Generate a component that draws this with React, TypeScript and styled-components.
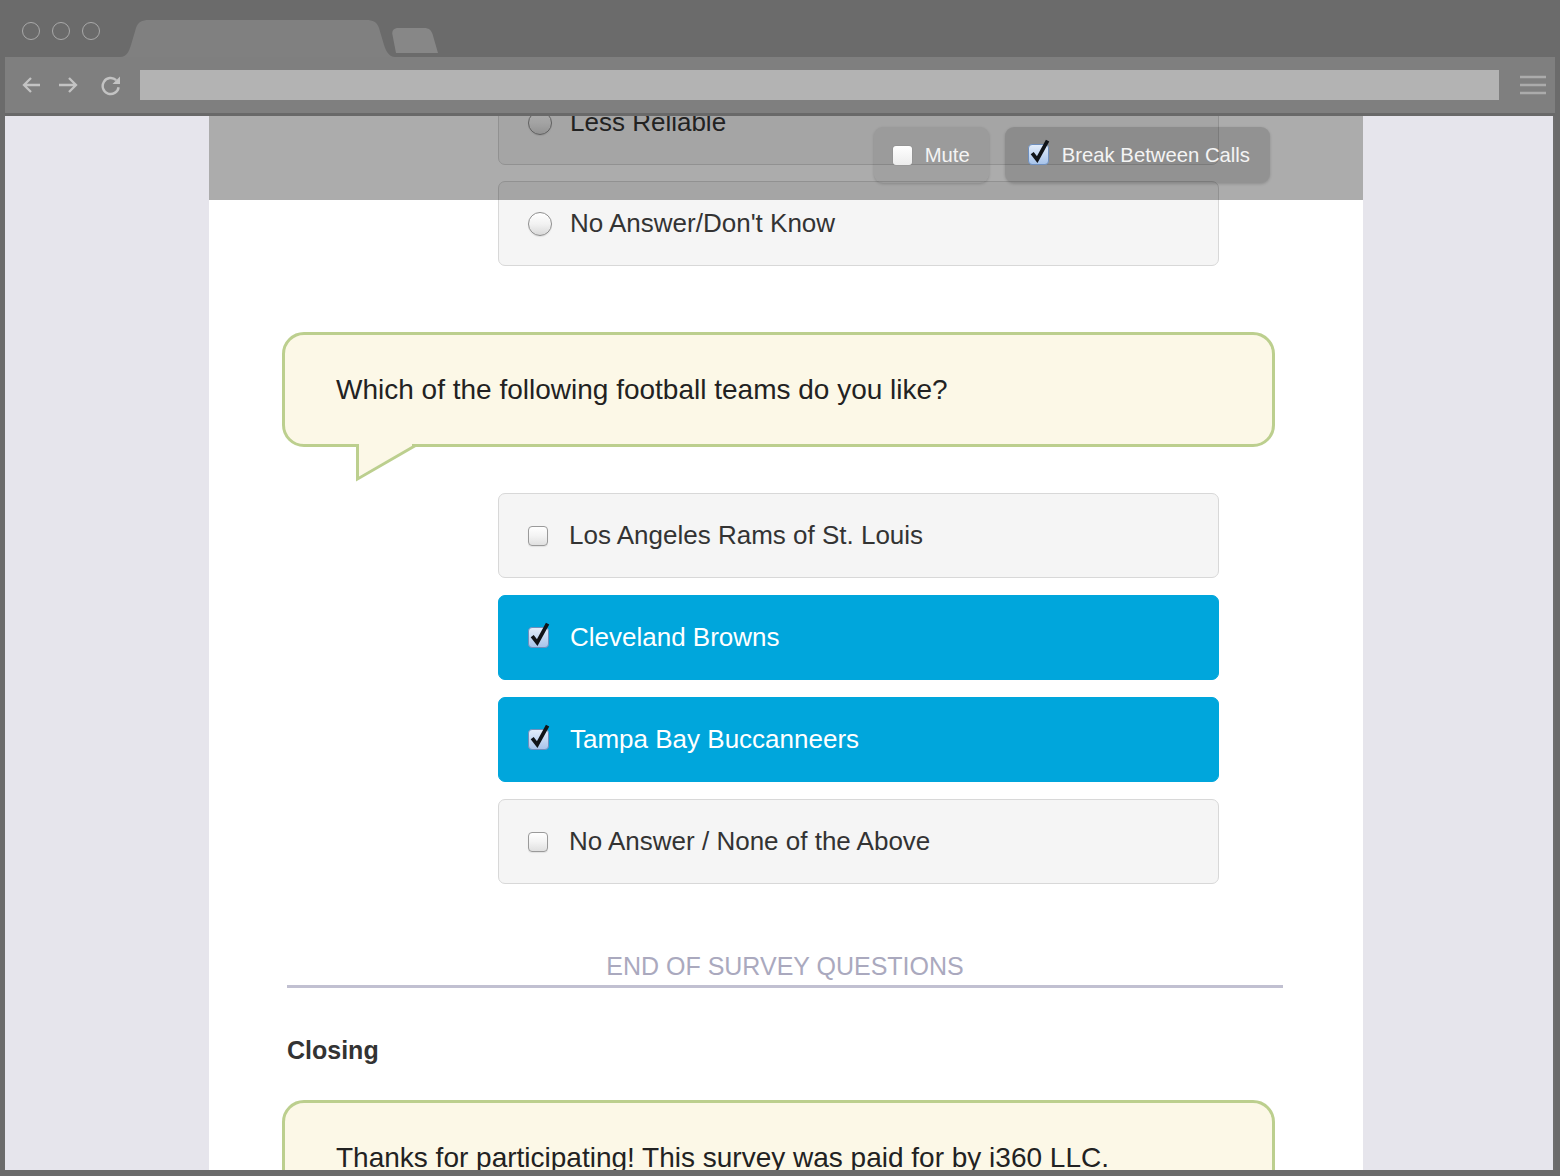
import React from 'react';
import styled, { createGlobalStyle } from 'styled-components';

const GlobalStyle = createGlobalStyle`
  html, body { margin: 0; padding: 0; }
  body {
    width: 1560px;
    height: 1176px;
    overflow: hidden;
    font-family: "Liberation Sans", Arial, Helvetica, sans-serif;
    background: #6b6b6b;
  }
  * { box-sizing: border-box; }
`;

const Window = styled.div`
  width: 1560px;
  height: 1176px;
  background: #6b6b6b;
  display: flex;
  flex-direction: column;
`;

const TitleBar = styled.div`
  height: 57px;
  display: flex;
  align-items: flex-start;
  flex-shrink: 0;
`;

const Lights = styled.div`
  display: flex;
  gap: 12px;
  padding: 22px 0 0 22px;
`;

const Light = styled.span`
  width: 18px;
  height: 18px;
  border-radius: 50%;
  border: 1.6px solid #a9a9a9;
`;

const TabStrip = styled.svg`
  margin-left: 12px;
  display: block;
`;

const Body = styled.div`
  flex: 1;
  display: flex;
  flex-direction: column;
  padding: 0 5px 6px 5px;
  min-height: 0;
`;

const Toolbar = styled.div`
  height: 59px;
  flex-shrink: 0;
  background: #7f7f7f;
  border-bottom: 3px solid #696969;
  display: flex;
  align-items: center;
  padding: 0 9px 0 17px;
`;

const NavIcon = styled.svg<{ $gap: number }>`
  display: block;
  margin-right: ${(p) => p.$gap}px;
  flex-shrink: 0;
`;

const AddressBar = styled.div`
  flex: 1;
  height: 30px;
  background: #b3b3b3;
  margin-right: 21px;
`;

const Viewport = styled.div`
  flex: 1;
  min-height: 0;
  background: #e6e5ec;
  overflow: hidden;
  display: flex;
  border-right: 2px solid #6e6e6e;
`;

const Column = styled.div`
  position: relative;
  width: 1154px;
  margin-left: 204px;
  background: #ffffff;
  overflow: hidden;
`;

const CallBar = styled.div`
  position: absolute;
  top: 0;
  left: 0;
  right: 0;
  height: 84px;
  background: rgba(0, 0, 0, 0.325);
  z-index: 2;
  display: flex;
  justify-content: flex-end;
  align-items: flex-start;
  gap: 16px;
  padding: 11px 93px 0 0;
`;

const CallButton = styled.div<{ $active?: boolean }>`
  height: 56px;
  display: flex;
  align-items: center;
  padding: ${(p) => (p.$active ? '0 20px 0 23px' : '0 19px 0 19px')};
  border-radius: 9px;
  background: ${(p) => (p.$active ? 'rgba(0,0,0,0.15)' : 'rgba(0,0,0,0.06)')};
  box-shadow: 0 1px 3px rgba(0, 0, 0, 0.18);
  color: #f4f4f4;
  font-size: 20.3px;
`;

const WhiteBox = styled.span`
  width: 19px;
  height: 19px;
  border-radius: 3px;
  background: linear-gradient(#ffffff, #ececec);
  box-shadow: 0 0 1px rgba(0, 0, 0, 0.4);
  margin-right: 13px;
  margin-top: 1px;
`;

const Content = styled.div`
  display: flex;
  flex-direction: column;
  padding-left: 73px;
  margin-top: -36px; /* scrolled position of the survey */
`;

const OptionList = styled.div<{ $gap: number; $top?: number }>`
  display: flex;
  flex-direction: column;
  gap: ${(p) => p.$gap}px;
  width: 721px;
  margin-left: 216px;
  margin-top: ${(p) => p.$top ?? 0}px;
`;

const Option = styled.div<{ $selected?: boolean }>`
  height: 85px;
  display: flex;
  align-items: center;
  padding-left: 29px;
  border-radius: 7px;
  font-size: 26px;
  color: ${(p) => (p.$selected ? '#ffffff' : '#333333')};
  background: ${(p) => (p.$selected ? '#00a6dc' : '#f5f5f5')};
  border: 1px solid ${(p) => (p.$selected ? '#00a6dc' : '#d8d8d8')};
`;

const Radio = styled.span`
  width: 24px;
  height: 24px;
  border-radius: 50%;
  border: 1px solid #8e8e8e;
  background: linear-gradient(#ffffff 0%, #f2f2f2 50%, #d9d9d9 100%);
  box-shadow: inset 0 1px 1px rgba(255, 255, 255, 0.9), 0 1px 1px rgba(0, 0, 0, 0.08);
  margin-right: 18px;
  flex-shrink: 0;
`;

const Box = styled.span`
  width: 20px;
  height: 20px;
  border-radius: 4px;
  border: 1px solid #9a9a9a;
  background: linear-gradient(#ffffff 0%, #f3f3f3 50%, #e0e0e0 100%);
  box-shadow: 0 1px 1px rgba(0, 0, 0, 0.08);
  margin-right: 21px;
  flex-shrink: 0;
`;

const CheckSvg = styled.svg<{ $gap: number }>`
  display: block;
  flex-shrink: 0;
  margin-right: ${(p) => p.$gap}px;
  margin-top: -6px;
  overflow: visible;
`;

const Bubble = styled.div<{ $top: number }>`
  position: relative;
  width: 993px;
  height: 115px;
  margin-top: ${(p) => p.$top}px;
  border: 3px solid #bccf8e;
  border-radius: 22px;
  background: #fcf8e7;
  display: flex;
  align-items: center;
  padding-left: 51px;
  font-size: 28px;
  color: #222222;
  flex-shrink: 0;
`;

const Tail = styled.svg`
  position: absolute;
  top: 100%;
  left: 71px;
  overflow: visible;
`;

const EndSection = styled.div`
  width: 996px;
  margin: 67px 0 0 5px;
  display: flex;
  flex-direction: column;
  align-items: center;
`;

const EndLabel = styled.div`
  font-size: 25px;
  line-height: 30px;
  color: #aaa9be;
`;

const EndRule = styled.div`
  align-self: stretch;
  height: 3px;
  margin-top: 4px;
  background: #c1c0d1;
`;

const SectionTitle = styled.div`
  margin: 47px 0 0 5px;
  font-size: 25px;
  line-height: 30px;
  font-weight: bold;
  color: #333333;
`;

const Checked = ({ gap }: { gap: number }) => (
  <CheckSvg $gap={gap} width="22" height="26" viewBox="0 0 22 26">
    <defs>
      <linearGradient id="cbg" x1="0" y1="0" x2="0" y2="1">
        <stop offset="0" stopColor="#e4eefb" />
        <stop offset="1" stopColor="#a6c3ea" />
      </linearGradient>
    </defs>
    <rect x="0.5" y="5.5" width="20" height="20" rx="3.5" fill="url(#cbg)" stroke="#6f8fbd" />
    <path
      d="M4.2 14.2 L9.2 20.6 L19.6 1.6"
      fill="none"
      stroke="#111418"
      strokeWidth="3.8"
      strokeLinejoin="miter"
      strokeLinecap="butt"
    />
  </CheckSvg>
);

export default function App() {
  return (
    <>
      <GlobalStyle />
      <Window>
        <TitleBar>
          <Lights>
            <Light />
            <Light />
            <Light />
          </Lights>
          <TabStrip width="330" height="57" viewBox="0 0 330 57">
            <path
              d="M8 57 C15 57 17 51 19 45 L24 28 C26 22 30 20 37 20 L254 20 C261 20 265 22 267 28 L272 45 C274 51 277 57 283 57 Z"
              fill="#808080"
            />
            <path
              d="M284 53 L280.5 35 C279.5 30.5 282 28 286.5 28 L312 28 C317 28 319 30 320.5 34 L326 53 Z"
              fill="#878787"
            />
          </TabStrip>
        </TitleBar>
        <Body>
          <Toolbar>
            <NavIcon $gap={17} width="19" height="18" viewBox="0 0 19 18">
              <path d="M18 9 H2 M9 2 L2 9 L9 16" fill="none" stroke="#c3c3c3" strokeWidth="2.3" />
            </NavIcon>
            <NavIcon $gap={22} width="20" height="18" viewBox="0 0 20 18">
              <path d="M1 9 H18 M11 2 L18 9 L11 16" fill="none" stroke="#c3c3c3" strokeWidth="2.3" />
            </NavIcon>
            <NavIcon $gap={19} width="21" height="21" viewBox="0 0 21 21">
              <path d="M16.2 5.2 A8 8 0 1 0 18.6 12.2" fill="none" stroke="#c3c3c3" strokeWidth="2.4" />
              <path d="M20 1.5 L20 9 L12.5 9 Z" fill="#c3c3c3" />
            </NavIcon>
            <AddressBar />
            <NavIcon $gap={0} width="26" height="22" viewBox="0 0 26 22">
              <path d="M0 3 H26 M0 11 H26 M0 19 H26" stroke="#ababab" strokeWidth="2.4" />
            </NavIcon>
          </Toolbar>
          <Viewport>
            <Column>
              <CallBar>
                <CallButton>
                  <WhiteBox />
                  Mute
                </CallButton>
                <CallButton $active>
                  <Checked gap={12} />
                  Break Between Calls
                </CallButton>
              </CallBar>
              <Content>
                <OptionList $gap={16}>
                  <Option>
                    <Radio />
                    Less Reliable
                  </Option>
                  <Option>
                    <Radio />
                    No Answer/Don't Know
                  </Option>
                </OptionList>

                <Bubble $top={66}>
                  Which of the following football teams do you like?
                  <Tail width="62" height="38" viewBox="0 0 62 38">
                    <polygon points="3,0 3,32 56,3 56,0" fill="#fcf8e7" />
                    <polyline
                      points="1.5,0 1.5,35 59.5,1.5"
                      fill="none"
                      stroke="#bccf8e"
                      strokeWidth="3"
                      strokeLinejoin="miter"
                    />
                  </Tail>
                </Bubble>

                <OptionList $gap={17} $top={46}>
                  <Option>
                    <Box />
                    Los Angeles Rams of St. Louis
                  </Option>
                  <Option $selected>
                    <Checked gap={20} />
                    Cleveland Browns
                  </Option>
                  <Option $selected>
                    <Checked gap={20} />
                    Tampa Bay Buccanneers
                  </Option>
                  <Option>
                    <Box />
                    No Answer / None of the Above
                  </Option>
                </OptionList>

                <EndSection>
                  <EndLabel>END OF SURVEY QUESTIONS</EndLabel>
                  <EndRule />
                </EndSection>

                <SectionTitle>Closing</SectionTitle>

                <Bubble $top={35}>
                  Thanks for participating! This survey was paid for by i360 LLC.
                </Bubble>
              </Content>
            </Column>
          </Viewport>
        </Body>
      </Window>
    </>
  );
}
